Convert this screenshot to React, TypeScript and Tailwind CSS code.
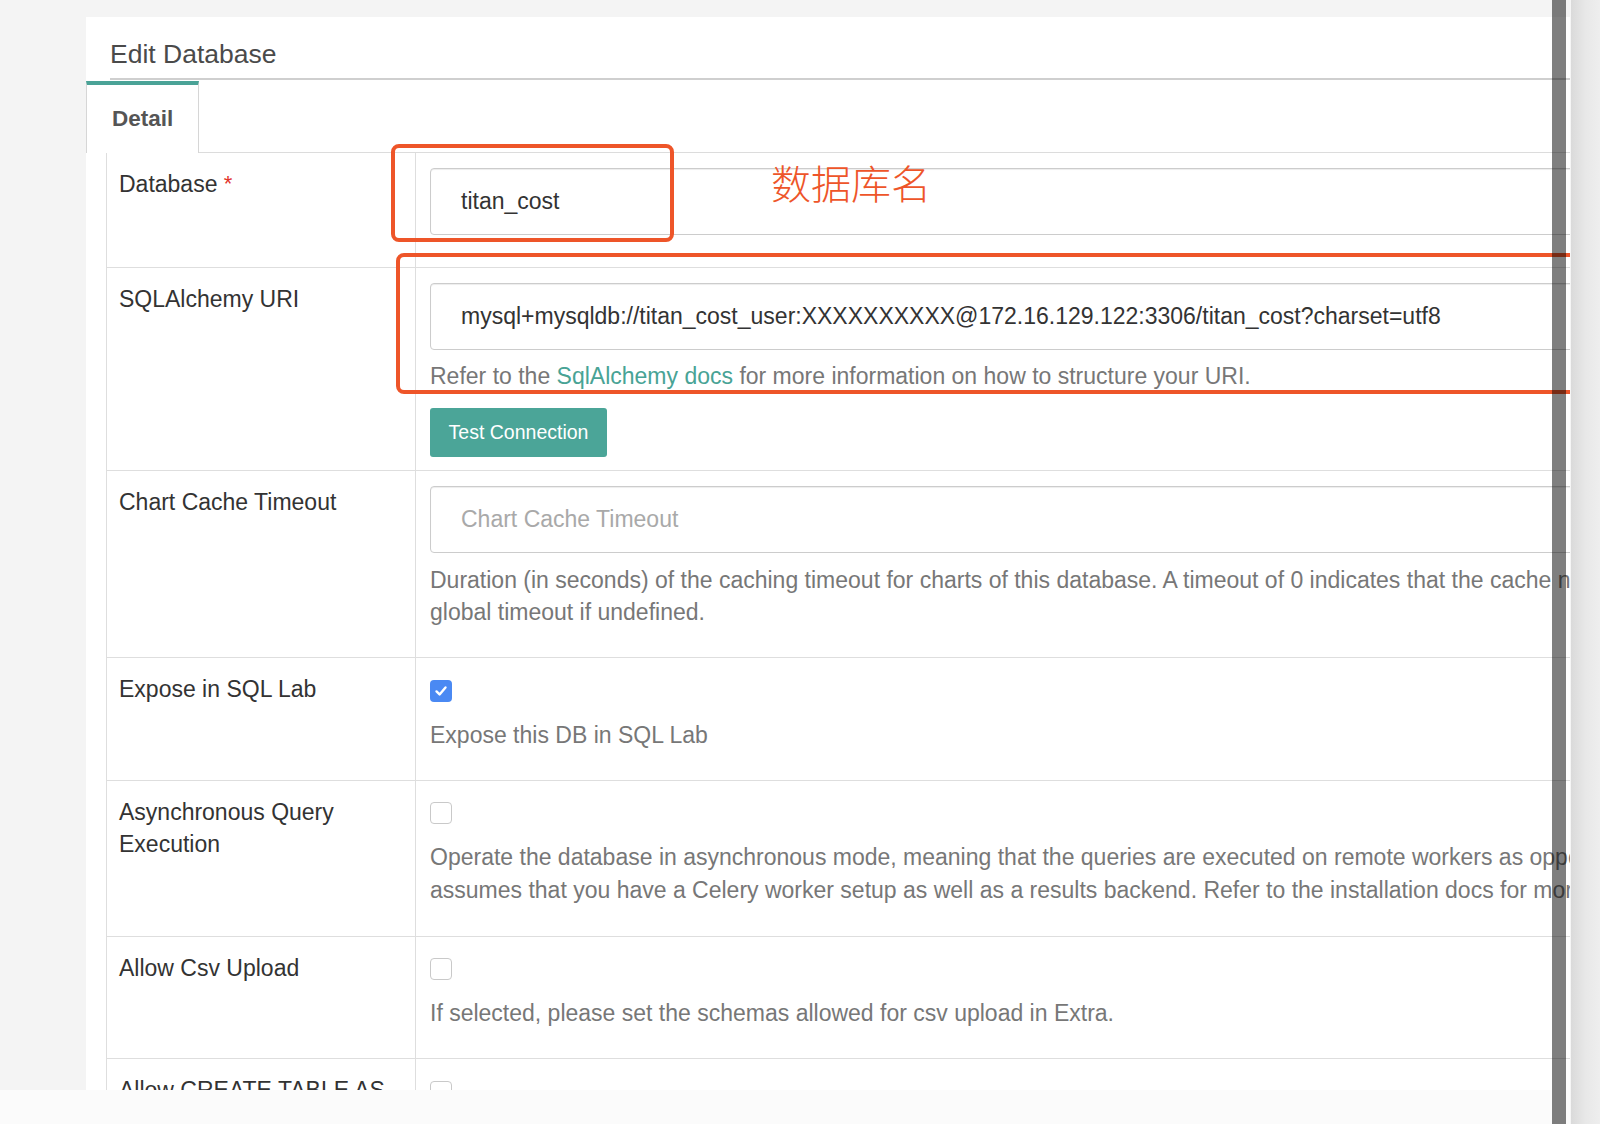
import React from "react";

const FONT = { fontFamily: '"Liberation Sans", Arial, "Noto Sans CJK SC", sans-serif' };

function Check({ checked }: { checked?: boolean }) {
  if (checked) {
    return (
      <div className="w-[22px] h-[22px] rounded-[4px] bg-[#4a89f3] flex items-center justify-center">
        <svg width="14" height="14" viewBox="0 0 14 14" fill="none">
          <path d="M2.5 7.4 L5.6 10.4 L11.5 3.4" stroke="white" strokeWidth="2.4" strokeLinecap="round" strokeLinejoin="round" />
        </svg>
      </div>
    );
  }
  return <div className="w-[22px] h-[22px] rounded-[4px] border border-[#c9c9c9] bg-white" />;
}

function Row({ label, children, last }: { label: React.ReactNode; children: React.ReactNode; last?: boolean }) {
  return (
    <div className={"flex " + (last ? "" : "border-b border-[#dedede]")}>
      <div className="w-[309px] shrink-0 border-r border-[#dedede] pl-[12px] pt-[15px] text-[23px] leading-[32px] text-[#333]">
        {label}
      </div>
      <div className="flex-1 pl-[14px] pt-[15px]">{children}</div>
    </div>
  );
}

function Input({ value, placeholder }: { value?: string; placeholder?: string }) {
  return (
    <div className="h-[67px] w-[1300px] border border-[#cccccc] rounded-[4px] shadow-[inset_0_1px_1px_rgba(0,0,0,0.075)] flex items-center pl-[30px] text-[23px] whitespace-nowrap">
      {value ? <span className="text-[#333]">{value}</span> : <span className="text-[#a9a9a9]">{placeholder}</span>}
    </div>
  );
}

export default function App() {
  return (
    <div className="relative flex w-[1600px] h-[1124px] overflow-hidden bg-[#f4f4f4]" style={FONT}>
      <div className="flex flex-col w-[1570px] shrink-0">
        <div className="relative h-[1090px] overflow-hidden pt-[17px] pl-[86px]">
          <div className="w-[1700px] bg-white h-[1200px]">
            {/* title */}
            <div className="ml-[24px] pt-[22px] pb-[8px] border-b-2 border-[#cfcfcf]">
              <div className="text-[26.5px] leading-[31px] text-[#4a4a4a]">Edit Database</div>
            </div>
            {/* tabs */}
            <div className="mt-[1px] flex border-b border-[#dcdcdc]">
              <div className="-mb-px h-[72px] w-[113px] bg-white border-t-4 border-t-[#4aa397] border-x border-x-[#d6d6d6] flex items-center pl-[25px] text-[22.5px] font-bold text-[#555]">
                Detail
              </div>
            </div>
            {/* table */}
            <div className="ml-[20px] border border-t-0 border-[#dedede]">
              <Row label={<span>Database <span className="text-[#e2332a] text-[22px] relative -top-[1px]">*</span></span>}>
                <div className="pb-[32px]">
                  <Input value="titan_cost" />
                </div>
              </Row>
              <Row label="SQLAlchemy URI">
                <Input value="mysql+mysqldb://titan_cost_user:XXXXXXXXXX@172.16.129.122:3306/titan_cost?charset=utf8" />
                <div className="mt-[10px] text-[23px] leading-[32px] text-[#777] whitespace-nowrap">
                  Refer to the <span className="text-[#48a395]">SqlAlchemy docs</span> for more information on how to structure your URI.
                </div>
                <div className="mt-[16px] mb-[13px] h-[49px] w-[177px] rounded-[3px] bg-[#4ba598] flex items-center justify-center text-white text-[19.5px]">
                  Test Connection
                </div>
              </Row>
              <Row label="Chart Cache Timeout">
                <Input placeholder="Chart Cache Timeout" />
                <div className="mt-[11px] mb-[29px] text-[23px] leading-[32px] text-[#777] whitespace-nowrap">
                  <div>Duration (in seconds) of the caching timeout for charts of this database. A timeout of 0 indicates that the cache never expires. Note this defaults to the</div>
                  <div>global timeout if undefined.</div>
                </div>
              </Row>
              <Row label="Expose in SQL Lab">
                <div className="mt-[7px]">
                  <Check checked />
                </div>
                <div className="mt-[17px] mb-[29px] text-[23px] leading-[32px] text-[#777] whitespace-nowrap">
                  Expose this DB in SQL Lab
                </div>
              </Row>
              <Row label={<span>Asynchronous Query<br />Execution</span>}>
                <div className="mt-[6px]">
                  <Check />
                </div>
                <div className="mt-[17px] mb-[30px] text-[23px] leading-[32.5px] text-[#777] whitespace-nowrap">
                  <div>Operate the database in asynchronous mode, meaning that the queries are executed on remote workers as opposed to on the web server itself. This</div>
                  <div>assumes that you have a Celery worker setup as well as a results backend. Refer to the installation docs for more information.</div>
                </div>
              </Row>
              <Row label="Allow Csv Upload">
                <div className="mt-[6px]">
                  <Check />
                </div>
                <div className="mt-[17px] mb-[29px] text-[23px] leading-[32px] text-[#777] whitespace-nowrap">
                  If selected, please set the schemas allowed for csv upload in Extra.
                </div>
              </Row>
              <Row label="Allow CREATE TABLE AS" last>
                <div className="mt-[7px]">
                  <Check />
                </div>
                <div className="h-[80px]" />
              </Row>
            </div>
          </div>

          {/* annotations */}
          <div className="absolute left-[391px] top-[144px] w-[283px] h-[98px] border-4 border-[#ee5529] rounded-[8px]" />
          <div className="absolute left-[396px] top-[253px] w-[1300px] h-[141px] border-4 border-[#ee5529] rounded-[8px]" />
          <div
            className="absolute left-[771px] top-[160px] text-[40px] leading-[44px] text-[#ee5529] whitespace-nowrap"
            style={{ fontFamily: '"Noto Sans CJK SC", sans-serif', fontWeight: 300 }}
          >
            数据库名
          </div>
        </div>
        <div className="h-[34px] bg-[#fbfbfb]" />
      </div>
      <div className="flex-1 border-l border-[#f5f5f5] bg-gradient-to-r from-[#dadada] via-[#e8e8e8] to-[#eeeeee]" />
      <div className="absolute left-[1552px] top-0 h-full w-[14px] bg-black/50" />
    </div>
  );
}
